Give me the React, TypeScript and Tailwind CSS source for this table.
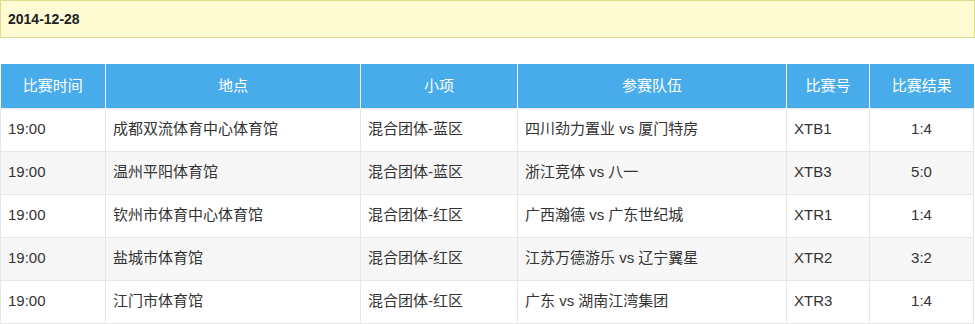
const HEADERS = ["比赛时间", "地点", "小项", "参赛队伍", "比赛号", "比赛结果"];

const ROWS = [
  ["19:00", "成都双流体育中心体育馆", "混合团体-蓝区", "四川劲力置业 vs 厦门特房", "XTB1", "1:4"],
  ["19:00", "温州平阳体育馆", "混合团体-蓝区", "浙江竞体 vs 八一", "XTB3", "5:0"],
  ["19:00", "钦州市体育中心体育馆", "混合团体-红区", "广西瀚德 vs 广东世纪城", "XTR1", "1:4"],
  ["19:00", "盐城市体育馆", "混合团体-红区", "江苏万德游乐 vs 辽宁翼星", "XTR2", "3:2"],
  ["19:00", "江门市体育馆", "混合团体-红区", "广东 vs 湖南江湾集团", "XTR3", "1:4"],
];

const WIDTHS = ["w-[105px]", "w-[255px]", "w-[157px]", "w-[269px]", "w-[83px]", "w-[104px]"];

export default function App() {
  return (
    <div className="w-[975px] h-[324px] overflow-hidden bg-white font-['Liberation_Sans','Noto_Sans_CJK_SC',sans-serif]">
      {/* Date banner */}
      <div className="h-[38px] border border-[#e2d98c] bg-[#fffbd2] flex items-center px-[7px]">
        <span className="text-[14px] font-bold text-[#222]">2014-12-28</span>
      </div>

      {/* Match table */}
      <table className="mt-[26px] w-[973px] table-fixed border-collapse text-[15px]">
        <thead>
          <tr className="h-[44px] bg-[#49acea]">
            {HEADERS.map((h, i) => (
              <th
                key={h}
                className={`${WIDTHS[i]} font-normal text-white text-center border-l border-white first:border-l-0`}
              >
                {h}
              </th>
            ))}
          </tr>
        </thead>
        <tbody>
          {ROWS.map((row, r) => (
            <tr key={r} className={`h-[43px] ${r % 2 === 1 ? "bg-[#f7f7f7]" : "bg-white"}`}>
              {row.map((cell, c) => (
                <td
                  key={c}
                  className={`border border-[#e6e6e6] text-[#333] ${c === 5 ? "text-center" : "text-left pl-[7px]"}`}
                >
                  {cell}
                </td>
              ))}
            </tr>
          ))}
        </tbody>
      </table>
    </div>
  );
}
